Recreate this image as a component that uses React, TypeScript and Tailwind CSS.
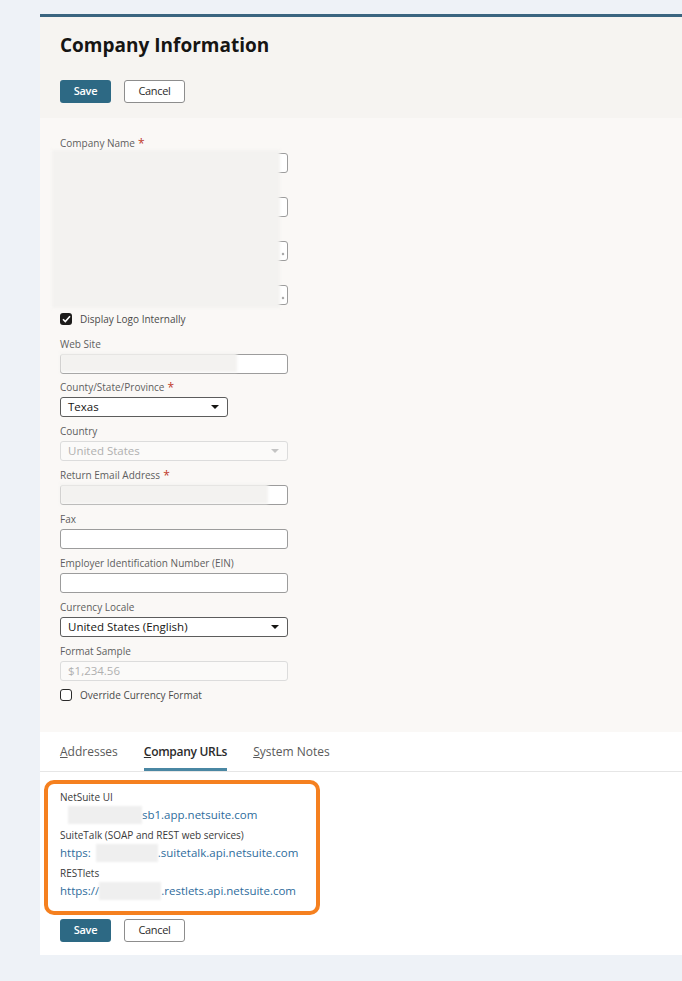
import React from 'react';

const font = "font-['Open_Sans','Liberation_Sans',sans-serif]";

function Req() {
  return <span className="ml-[3px] text-[12px] leading-[10px] text-[#c0392b] relative top-[1px]">*</span>;
}

function Label({ text, required }: { text?: string; required?: boolean }) {
  return (
    <div className="h-[14px] text-[10px] leading-[14px] text-[#5e5e5e] whitespace-nowrap">
      {text}
      {required && <Req />}
    </div>
  );
}

function Caret({ muted }: { muted?: boolean }) {
  return (
    <svg width="8" height="4" viewBox="0 0 8 4" className="shrink-0">
      <path d="M0 0h8L4 4z" fill={muted ? '#c4c4c4' : '#161513'} />
    </svg>
  );
}

function Field({
  label,
  required,
  children,
  className = 'mb-[7px]',
}: {
  label?: string;
  required?: boolean;
  children: React.ReactNode;
  className?: string;
}) {
  return (
    <div className={className}>
      <Label text={label} required={required} />
      <div className="mt-[3px]">{children}</div>
    </div>
  );
}

function TextBox({
  w = 'w-[228px]',
  value,
  disabled,
  area,
}: {
  w?: string;
  value?: string;
  disabled?: boolean;
  area?: boolean;
}) {
  return (
    <div
      className={`${w} h-[20px] rounded-[3px] border flex items-center px-[7px] text-[11.5px] relative ${
        disabled ? 'border-[#dcdcdc] bg-[#fbfaf9] text-[#b0b0b0]' : 'border-[#9c9c9c] bg-white text-[#161513]'
      }`}
    >
      {value}
      {area && <span className="absolute right-[3px] bottom-[5px] w-[2px] h-[2px] bg-[#9a9a9a] rotate-45" />}
    </div>
  );
}

function Select({ w = 'w-[228px]', value, disabled }: { w?: string; value: string; disabled?: boolean }) {
  return (
    <div
      className={`${w} h-[20px] rounded-[3px] border flex items-center justify-between pl-[7px] pr-[8px] text-[11.5px] ${
        disabled ? 'border-[#dcdcdc] bg-[#fbfaf9] text-[#b0b0b0]' : 'border-[#5c5c5c] bg-white text-[#161513]'
      }`}
    >
      <span>{value}</span>
      <Caret muted={disabled} />
    </div>
  );
}

function Check({ checked, label }: { checked?: boolean; label: string }) {
  return (
    <div className="h-[14px] flex items-center gap-[8px]">
      {checked ? (
        <div className="w-[12px] h-[12px] rounded-[3px] bg-[#1d1c1b] flex items-center justify-center">
          <svg width="9" height="8" viewBox="0 0 9 8">
            <path d="M1 4.2l2.3 2.3L8 1.3" fill="none" stroke="#fff" strokeWidth="1.6" />
          </svg>
        </div>
      ) : (
        <div className="w-[12px] h-[12px] rounded-[3px] border-[1.5px] border-[#2a2a2a] bg-white" />
      )}
      <span className="text-[10px] text-[#4a4a4a]">{label}</span>
    </div>
  );
}

function Redact({ className }: { className: string }) {
  return <div className={`absolute bg-[#f3f2f0] blur-[1.5px] ${className}`} />;
}

function Buttons() {
  return (
    <div className="flex gap-[13px]">
      <button className="w-[51px] h-[23px] rounded-[3px] bg-[#2d6984] text-white text-[11px] font-semibold tracking-[-0.3px]">
        Save
      </button>
      <button className="w-[61px] h-[23px] rounded-[3px] border border-[#8d8d8d] bg-white text-[#2b2b2b] text-[11px] tracking-[-0.3px]">
        Cancel
      </button>
    </div>
  );
}

function UrlRow({ label, children }: { label: string; children: React.ReactNode }) {
  return (
    <div>
      <div className="h-[15px] text-[10px] leading-[15px] text-[#3a3a3a]">{label}</div>
      <div className="h-[19px] leading-[19px] text-[11.5px] text-[#2e6c9c] flex items-center">{children}</div>
    </div>
  );
}

function Blot({ className }: { className: string }) {
  return <span className={`h-[18px] bg-[#efefef] blur-[1px] ${className}`} />;
}

export default function App() {
  return (
    <div className={`min-h-[981px] bg-[#eef2f7] pt-[14px] pl-[40px] ${font}`}>
      <div className="border-t-[3px] border-[#3a6580]">
        {/* header */}
        <div className="bg-[#f6f4f1] h-[101px] pl-5 pt-[15px]">
          <h1 className="text-[19px] leading-[26px] font-bold text-[#161513]">Company Information</h1>
          <div className="mt-[22px]">
            <Buttons />
          </div>
        </div>

        {/* form */}
        <div className="bg-[#faf8f6] pl-5 pt-[18px] pb-[30px]">
          <div className="relative">
            <Field label="Company Name" required>
              <TextBox />
            </Field>
            <Field>
              <TextBox />
            </Field>
            <Field>
              <TextBox area />
            </Field>
            <Field>
              <TextBox area />
            </Field>
            <Redact className="left-[-8px] top-[14px] w-[228px] h-[158px]" />
          </div>

          <div className="mb-[11px]">
            <Check checked label="Display Logo Internally" />
          </div>

          <Field label="Web Site" className="mb-[6px] relative">
            <TextBox />
            <Redact className="left-0 top-[16px] w-[177px] h-[19px]" />
          </Field>
          <Field label="County/State/Province" required>
            <Select w="w-[168px]" value="Texas" />
          </Field>
          <Field label="Country">
            <Select value="United States" disabled />
          </Field>
          <Field label="Return Email Address" required className="mb-[7px] relative">
            <TextBox />
            <Redact className="left-0 top-[16px] w-[208px] h-[20px]" />
          </Field>
          <Field label="Fax">
            <TextBox />
          </Field>
          <Field label="Employer Identification Number (EIN)">
            <TextBox />
          </Field>
          <Field label="Currency Locale">
            <Select value="United States (English)" />
          </Field>
          <Field label="Format Sample">
            <TextBox value="$1,234.56" disabled />
          </Field>
          <Check label="Override Currency Format" />
        </div>

        {/* subtabs */}
        <div className="bg-white pb-[13px]">
          <div className="h-[40px] border-b border-[#e6e6e6] pl-5 flex gap-[26px] text-[12px]">
            <div className="h-full flex items-center border-b-[3px] border-transparent pt-[3px] text-[#5a5a5a]">
              <span><span className="underline">A</span>ddresses</span>
            </div>
            <div className="h-full flex items-center border-b-[3px] border-[#4a87a3] pt-[3px] text-[#2b2b2b] font-semibold tracking-[-0.3px]">
              <span><span className="underline">C</span>ompany URLs</span>
            </div>
            <div className="h-full flex items-center border-b-[3px] border-transparent pt-[3px] text-[#5a5a5a]">
              <span><span className="underline">S</span>ystem Notes</span>
            </div>
          </div>

          <div className="ml-[4px] mt-[8px] w-[276px] border-[4px] border-[#f5801f] rounded-[10px] pl-3 pt-[6px] pb-[11px] flex flex-col gap-[4px]">
            <UrlRow label="NetSuite UI">
              <Blot className="ml-[8px] w-[74px]" />
              <span>sb1.app.netsuite.com</span>
            </UrlRow>
            <UrlRow label="SuiteTalk (SOAP and REST web services)">
              <span>https:</span>
              <Blot className="ml-[5px] w-[62px]" />
              <span>.suitetalk.api.netsuite.com</span>
            </UrlRow>
            <UrlRow label="RESTlets">
              <span>https://</span>
              <Blot className="w-[62px]" />
              <span>.restlets.api.netsuite.com</span>
            </UrlRow>
          </div>

          <div className="pl-5 mt-[4px]">
            <Buttons />
          </div>
        </div>
      </div>
    </div>
  );
}
